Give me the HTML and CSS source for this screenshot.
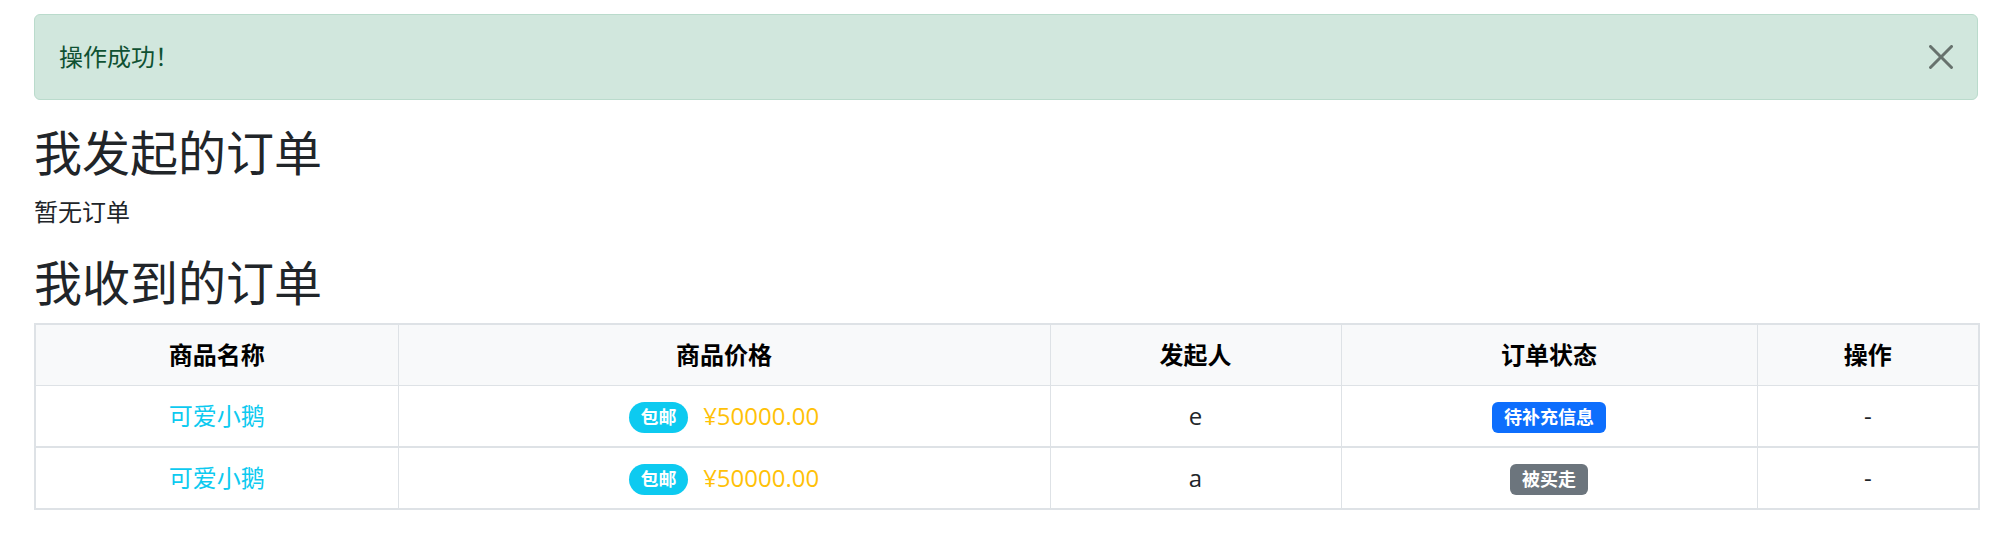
FILE: index.html
```html
<!DOCTYPE html>
<html lang="zh-CN">
<head>
<meta charset="utf-8">
<title>订单</title>
<link rel="stylesheet" href="styles.css">
</head>
<body>
<div class="page">
  <div class="alert">
    <span class="alert-text">操作成功！</span>
    <button class="btn-close" type="button" aria-label="Close">
      <svg viewBox="0 0 16 16" width="24" height="24"><path d="M.293.293a1 1 0 0 1 1.414 0L8 6.586 14.293.293a1 1 0 1 1 1.414 1.414L9.414 8l6.293 6.293a1 1 0 0 1-1.414 1.414L8 9.414l-6.293 6.293a1 1 0 0 1-1.414-1.414L6.586 8 .293 1.707a1 1 0 0 1 0-1.414z"/></svg>
    </button>
  </div>

  <h2 class="title">我发起的订单</h2>
  <p class="empty">暂无订单</p>

  <h2 class="title">我收到的订单</h2>
  <table class="orders">
    <colgroup>
      <col class="col-name">
      <col class="col-price">
      <col class="col-user">
      <col class="col-status">
      <col class="col-op">
    </colgroup>
    <thead>
      <tr>
        <th>商品名称</th>
        <th>商品价格</th>
        <th>发起人</th>
        <th>订单状态</th>
        <th>操作</th>
      </tr>
    </thead>
    <tbody>
      <tr>
        <td><a class="item-link" href="#">可爱小鹅</a></td>
        <td><span class="badge badge-pill badge-info">包邮</span><span class="price">¥50000.00</span></td>
        <td>e</td>
        <td><span class="badge badge-primary">待补充信息</span></td>
        <td>-</td>
      </tr>
      <tr>
        <td><a class="item-link" href="#">可爱小鹅</a></td>
        <td><span class="badge badge-pill badge-info">包邮</span><span class="price">¥50000.00</span></td>
        <td>a</td>
        <td><span class="badge badge-secondary">被买走</span></td>
        <td>-</td>
      </tr>
    </tbody>
  </table>
</div>
</body>
</html>
```

FILE: styles.css
```css
* {
  box-sizing: border-box;
}

html, body {
  margin: 0;
  padding: 0;
  background: #fff;
}

body {
  font-family: "Open Sans", "Noto Sans CJK SC", sans-serif;
  font-size: 24px;
  line-height: 1.5;
  color: #212529;
}

.page {
  padding: 14px 24px 0 34px;
}

.alert {
  position: relative;
  padding: 24px 72px 24px 24px;
  margin-bottom: 24px;
  background: #d1e7dd;
  border: 1px solid #badbcc;
  border-radius: 6px;
  color: #0f5132;
  line-height: 36px;
}

.btn-close {
  position: absolute;
  top: 0;
  right: 0;
  box-sizing: content-box;
  width: 24px;
  height: 24px;
  padding: 30px 24px;
  margin: 0;
  border: 0;
  background: transparent;
  opacity: 0.5;
  cursor: pointer;
}

.btn-close svg {
  display: block;
  fill: #000;
}

.title {
  margin: 0 0 12px;
  font-size: 48px;
  line-height: 1.2;
  font-weight: 400;
  color: #212529;
}

.empty {
  margin: 0 0 24px;
}

.orders {
  width: 100%;
  table-layout: fixed;
  border-collapse: collapse;
  border: 2px solid #dee2e6;
  text-align: center;
  line-height: 36px;
}

.col-name { width: 363px; }
.col-price { width: 652px; }
.col-user { width: 291px; }
.col-status { width: 416px; }
.col-op { width: 222px; }

.orders th,
.orders td {
  padding: 12px;
  border: 1px solid #dee2e6;
  vertical-align: middle;
}

.orders th {
  background: #f8f9fa;
  color: #000;
  font-weight: 700;
}

.orders tbody tr + tr td {
  border-top: 2px solid #dee2e6;
}

.orders td {
  color: #212529;
}

.item-link {
  color: #0dcaf0;
  text-decoration: none;
}

.badge {
  display: inline-block;
  padding: 6.5px 11.7px;
  font-size: 18px;
  line-height: 1;
  font-weight: 700;
  color: #fff;
  border-radius: 6px;
  white-space: nowrap;
  vertical-align: 1px;
}

.badge-pill {
  border-radius: 50rem;
}

.badge-info {
  background: #0dcaf0;
}

.badge-primary {
  background: #0d6efd;
}

.badge-secondary {
  background: #6c757d;
}

.price {
  margin-left: 15px;
  color: #ffc107;
}
```
